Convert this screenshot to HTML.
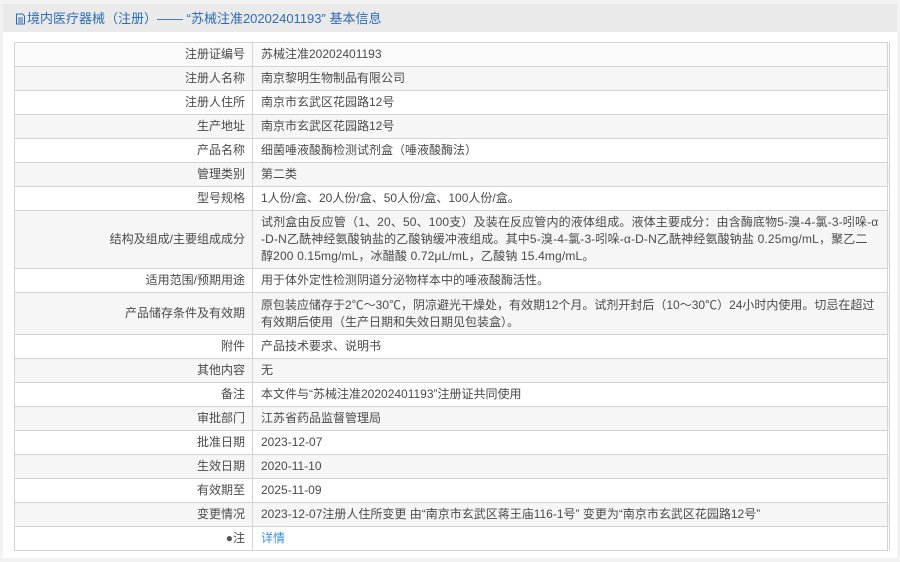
<!DOCTYPE html>
<html><head><meta charset="utf-8"><style>
body{margin:0;width:900px;height:562px;background:#f2f2f2;font-family:"Liberation Sans","Noto Sans CJK SC",sans-serif;overflow:hidden;position:relative}
.panel{position:absolute;left:3px;top:4px;width:894px;height:554px;background:#fff}
.hd{height:28px;background:#eaeaea;color:#2b6cb7;font-size:13px;line-height:29px;padding-left:12px}
.hd svg{vertical-align:-2px;margin-right:1px}
table{position:absolute;left:11px;top:38px;width:876px;border-collapse:collapse;font-size:12px;color:#4a4a4a;border-right:3px double #d4d4d4}
td{border:1px solid #d4d4d4;padding:0 8px;line-height:17px;height:23px;vertical-align:middle}
td.l{width:222px;text-align:right;padding-right:7px}
td.w{letter-spacing:0.15px}
tr:nth-child(even) td{background:#f6f6f6}
tr:first-child td{background:#fafafa}
a{color:#3a8ee6;text-decoration:none}
</style></head><body><div class="panel">
<div class="hd"><svg width="11" height="12" viewBox="0 0 11 12"><path d="M1.5 1h6l2 2v8h-8z" fill="none" stroke="#2b6cb7"/><path d="M3 5h5M3 7h5M3 9h5" stroke="#2b6cb7"/></svg>境内医疗器械（注册）—— “苏械注准20202401193” 基本信息</div>
<table>
<tr><td class="l">注册证编号</td><td>苏械注准20202401193</td></tr>
<tr><td class="l">注册人名称</td><td>南京黎明生物制品有限公司</td></tr>
<tr><td class="l">注册人住所</td><td>南京市玄武区花园路12号</td></tr>
<tr><td class="l">生产地址</td><td>南京市玄武区花园路12号</td></tr>
<tr><td class="l">产品名称</td><td>细菌唾液酸酶检测试剂盒（唾液酸酶法）</td></tr>
<tr><td class="l">管理类别</td><td>第二类</td></tr>
<tr><td class="l">型号规格</td><td>1人份/盒、20人份/盒、50人份/盒、100人份/盒。</td></tr>
<tr><td class="l" style="height:57px">结构及组成/主要组成成分</td><td class="w">试剂盒由反应管（1、20、50、100支）及装在反应管内的液体组成。液体主要成分：由含酶底物5-溴-4-氯-3-吲哚-α<br>-D-N乙酰神经氨酸钠盐的乙酸钠缓冲液组成。其中5-溴-4-氯-3-吲哚-α-D-N乙酰神经氨酸钠盐 0.25mg/mL，聚乙二<br>醇200 0.15mg/mL，冰醋酸 0.72μL/mL，乙酸钠 15.4mg/mL。</td></tr>
<tr><td class="l">适用范围/预期用途</td><td>用于体外定性检测阴道分泌物样本中的唾液酸酶活性。</td></tr>
<tr><td class="l" style="height:41px">产品储存条件及有效期</td><td>原包装应储存于2℃～30℃，阴凉避光干燥处，有效期12个月。试剂开封后（10～30℃）24小时内使用。切忌在超过<br>有效期后使用（生产日期和失效日期见包装盒）。</td></tr>
<tr><td class="l">附件</td><td>产品技术要求、说明书</td></tr>
<tr><td class="l">其他内容</td><td>无</td></tr>
<tr><td class="l">备注</td><td>本文件与“苏械注准20202401193”注册证共同使用</td></tr>
<tr><td class="l">审批部门</td><td>江苏省药品监督管理局</td></tr>
<tr><td class="l">批准日期</td><td>2023-12-07</td></tr>
<tr><td class="l">生效日期</td><td>2020-11-10</td></tr>
<tr><td class="l">有效期至</td><td>2025-11-09</td></tr>
<tr><td class="l">变更情况</td><td>2023-12-07注册人住所变更 由“南京市玄武区蒋王庙116-1号” 变更为“南京市玄武区花园路12号”</td></tr>
<tr><td class="l"><span style="color:#555">●</span>注</td><td><a>详情</a></td></tr>
</table></div></body></html>
